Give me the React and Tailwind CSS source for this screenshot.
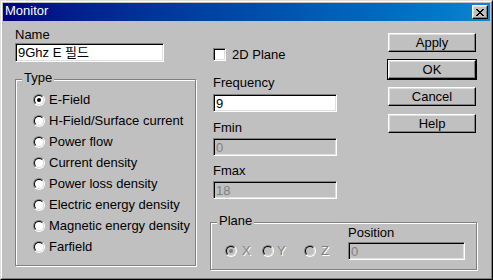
import React from "react";

const FONT = { fontFamily: '"Liberation Sans", "Noto Sans CJK KR", Arial, sans-serif' };

function Sunken({ className = "", children, disabled }) {
  return (
    <div
      className={`border border-t-[#808080] border-l-[#808080] border-r-white border-b-white shadow-[inset_1px_1px_0_#000,inset_-1px_-1px_0_#dfdfdf] pl-[2px] flex items-center text-[13px] leading-[15px] ${
        disabled ? "bg-[#c0c0c0] text-[#808080]" : "bg-white text-black"
      } ${className}`}
    >
      {children}
    </div>
  );
}

function Radio({ checked, disabled }) {
  return (
    <div className="w-[12px] h-[12px] shrink-0 rounded-full border border-t-[#808080] border-l-[#808080] border-r-white border-b-white">
      <div
        className={`w-full h-full rounded-full border border-t-black border-l-black border-r-[#dfdfdf] border-b-[#dfdfdf] flex items-center justify-center ${
          disabled ? "bg-[#c0c0c0]" : "bg-white"
        }`}
      >
        {checked && (
          <div className={`w-[4px] h-[4px] rounded-full ${disabled ? "bg-[#808080]" : "bg-black"}`} />
        )}
      </div>
    </div>
  );
}

function Group({ label, className = "", children }) {
  return (
    <div
      className={`relative border border-[#808080] shadow-[inset_1px_1px_0_#fff,1px_1px_0_#fff] ${className}`}
    >
      <div className="absolute top-[-10px] left-[6px] px-[2px] bg-[#c0c0c0] text-[13px] leading-[15px] text-black">
        {label}
      </div>
      {children}
    </div>
  );
}

function Button({ children, def }) {
  return (
    <div className={`w-[90px] h-[21px] ${def ? "border border-black" : "p-[1px]"}`}>
      <div className="w-full h-full bg-[#c0c0c0] border border-t-white border-l-white border-r-black border-b-black shadow-[inset_-1px_-1px_0_#808080,inset_1px_1px_0_#dfdfdf] flex items-center justify-center text-[13px] leading-[15px] text-black">
        {children}
      </div>
    </div>
  );
}

const types = [
  "E-Field",
  "H-Field/Surface current",
  "Power flow",
  "Current density",
  "Power loss density",
  "Electric energy density",
  "Magnetic energy density",
  "Farfield",
];

export default function App() {
  return (
    <div
      style={FONT}
      className="w-[493px] h-[280px] flex border border-t-[#dfdfdf] border-l-[#dfdfdf] border-r-black border-b-black bg-[#c0c0c0] text-black"
    >
      <div className="flex-1 flex flex-col p-[1px] border border-t-white border-l-white border-r-[#808080] border-b-[#808080]">
        {/* Title bar */}
        <div className="h-[18px] shrink-0 flex items-center justify-between bg-gradient-to-r from-[#000080] to-[#1084d0] pl-[2px] pr-[2px]">
          <span className="text-white text-[13px] leading-[16px] -mt-[2px]">Monitor</span>
          <div className="w-[16px] h-[14px] bg-[#c0c0c0] border border-t-white border-l-white border-r-black border-b-black shadow-[inset_-1px_-1px_0_#808080,inset_1px_1px_0_#dfdfdf] flex items-center justify-center">
            <svg width="8" height="7" viewBox="0 0 8 7" shapeRendering="crispEdges">
              <path
                fill="#000"
                d="M0 0h2v1h-2zM6 0h2v1h-2zM1 1h2v1h-2zM5 1h2v1h-2zM2 2h4v1h-4zM3 3h2v1h-2zM2 4h4v1h-4zM1 5h2v1h-2zM5 5h2v1h-2zM0 6h2v1h-2zM6 6h2v1h-2z"
              />
            </svg>
          </div>
        </div>

        {/* Body */}
        <div className="flex pt-[7px] pl-[12px] text-[13px] leading-[14px]">
          {/* Left column */}
          <div className="w-[182px] shrink-0 flex flex-col">
            <div className="h-[14px]">Name</div>
            <Sunken className="mt-[1px] w-[149px] h-[19px]">9Ghz E 필드</Sunken>
            <Group label="Type" className="mt-[17px] h-[187px] w-[181px]">
              <div className="pt-[9px] pl-[17px] flex flex-col">
                {types.map((t, i) => (
                  <div key={t} className="h-[21px] flex items-center gap-[4px]">
                    <Radio checked={i === 0} />
                    <span>{t}</span>
                  </div>
                ))}
              </div>
            </Group>
          </div>

          {/* Right area */}
          <div className="ml-[13px] w-[268px] flex flex-col">
            <div className="flex">
              <div className="pl-[3px] pt-[20px] w-[127px] flex flex-col">
                <div className="flex items-center gap-[6px] h-[13px]">
                  <div className="w-[13px] h-[13px] bg-white border border-t-[#808080] border-l-[#808080] border-r-white border-b-white shadow-[inset_1px_1px_0_#000,inset_-1px_-1px_0_#dfdfdf]" />
                  <span>2D Plane</span>
                </div>
                <div className="mt-[15px] h-[14px]">Frequency</div>
                <Sunken className="mt-[4px] w-[124px] h-[18px]">9</Sunken>
                <div className="mt-[9px] h-[14px]">Fmin</div>
                <Sunken disabled className="mt-[3px] w-[124px] h-[18px]">0</Sunken>
                <div className="mt-[8px] h-[14px]">Fmax</div>
                <Sunken disabled className="mt-[3px] w-[124px] h-[18px]">18</Sunken>
              </div>
              <div className="ml-auto mr-[1px] pt-[4px] flex flex-col gap-[6px]">
                <Button>Apply</Button>
                <Button def>OK</Button>
                <Button>Cancel</Button>
                <Button>Help</Button>
              </div>
            </div>

            <Group label="Plane" className="mt-[23px] h-[48px] w-[267px]">
              <div className="flex pl-[14px] pt-[3px]">
                <div className="flex items-center self-end h-[18px] text-[#808080] [text-shadow:1px_1px_0_#fff]">
                  <div className="w-[37px] flex items-center gap-[5px]">
                    <Radio checked disabled />
                    <span>X</span>
                  </div>
                  <div className="w-[42px] flex items-center gap-[3px]">
                    <Radio disabled />
                    <span>Y</span>
                  </div>
                  <div className="w-[44px] flex items-center gap-[5px]">
                    <Radio disabled />
                    <span>Z</span>
                  </div>
                </div>
                <div className="flex flex-col">
                  <div className="h-[14px]">Position</div>
                  <Sunken disabled className="mt-[2px] w-[117px] h-[18px]">0</Sunken>
                </div>
              </div>
            </Group>
          </div>
        </div>
      </div>
    </div>
  );
}
